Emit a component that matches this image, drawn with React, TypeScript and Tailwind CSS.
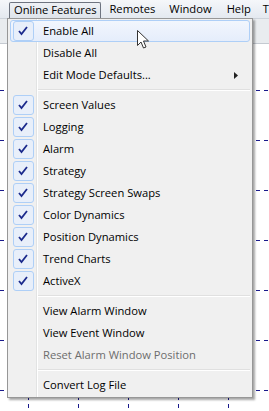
import React from "react";

type Item =
  | { kind: "item"; label: string; checked?: boolean; hot?: boolean; disabled?: boolean; sub?: boolean }
  | { kind: "sep" };

const items: Item[] = [
  { kind: "item", label: "Enable All", checked: true, hot: true },
  { kind: "item", label: "Disable All" },
  { kind: "item", label: "Edit Mode Defaults...", sub: true },
  { kind: "sep" },
  { kind: "item", label: "Screen Values", checked: true },
  { kind: "item", label: "Logging", checked: true },
  { kind: "item", label: "Alarm", checked: true },
  { kind: "item", label: "Strategy", checked: true },
  { kind: "item", label: "Strategy Screen Swaps", checked: true },
  { kind: "item", label: "Color Dynamics", checked: true },
  { kind: "item", label: "Position Dynamics", checked: true },
  { kind: "item", label: "Trend Charts", checked: true },
  { kind: "item", label: "ActiveX", checked: true },
  { kind: "sep" },
  { kind: "item", label: "View Alarm Window" },
  { kind: "item", label: "View Event Window" },
  { kind: "item", label: "Reset Alarm Window Position", disabled: true },
  { kind: "sep" },
  { kind: "item", label: "Convert Log File" },
];

const Check = () => (
  <svg width="10" height="10" viewBox="0 0 10 10">
    <path d="M1 5 L3.5 8 L9 1" fill="none" stroke="#1b2a8c" strokeWidth="1.8" />
  </svg>
);

const Cursor = () => (
  <svg width="13" height="20" viewBox="0 0 13 20" className="absolute left-[137px] top-[30px]">
    <path d="M0.5 0.5 L0.5 15.5 L4 12 L6.5 18 L9 17 L6.5 11 L11.5 11 Z" fill="#fff" stroke="#333" strokeWidth="1" />
  </svg>
);

const Grid = () => {
  const hs = [40, 90, 140, 190, 240, 290, 340, 390];
  const vs = [28, 78, 128, 178, 228];
  return (
    <svg width="269" height="411" className="absolute left-0 top-0">
      {hs.map((y) => (
        <line key={y} x1="0" y1={y + 0.5} x2="269" y2={y + 0.5} stroke="#1a1a8c" strokeDasharray="4 4" />
      ))}
      {vs.map((x) => (
        <line key={x} x1={x + 0.5} y1="44" x2={x + 0.5} y2="411" stroke="#1a1a8c" strokeDasharray="4 4" />
      ))}
    </svg>
  );
};

export default function App() {
  return (
    <div
      className="relative w-[269px] h-[411px] overflow-hidden bg-white text-[11.2px] text-black"
      style={{ fontFamily: '"Open Sans", "Noto Sans", sans-serif' }}
    >
      <Grid />
      {/* toolbar strip */}
      <div className="absolute left-0 top-[19px] w-[269px] h-[25px] bg-[#e9ecef] border-b border-[#c5cad1]" />

      {/* menu bar */}
      <div className="absolute left-0 top-0 w-[269px] h-[19px] flex items-center whitespace-nowrap bg-gradient-to-b from-[#f5f7fa] to-[#e4e9f0] border-b border-[#cdd3db]">
        <div className="ml-[9px] w-[93px] h-[17px] mt-[2px] flex items-center justify-center rounded-t-[2px] border border-b-0 border-[#6e7480] bg-gradient-to-b from-[#eef1f5] to-[#dde3ea]">
          Online Features
        </div>
        <div className="ml-[8px]">Remotes</div>
        <div className="ml-[14px]">Window</div>
        <div className="ml-[15px]">Help</div>
        <div className="ml-[12px]">T</div>
      </div>

      {/* dropdown */}
      <div className="absolute left-[7px] top-[18px] w-[246px] bg-[#f0f0f0] border border-[#979797] shadow-[2px_2px_2px_rgba(0,0,0,0.35)] py-[1px] whitespace-nowrap">
        <div className="absolute left-[28px] top-0 bottom-0 w-[1px] bg-[#e2e3e3]" />
        <div className="absolute left-[29px] top-0 bottom-0 w-[1px] bg-white" />
        {items.map((it, i) =>
          it.kind === "sep" ? (
            <div key={i} className="relative h-[8px] flex items-center pl-[30px] pr-[2px]">
              <div className="w-full">
                <div className="h-[1px] bg-[#e0e0e0]" />
                <div className="h-[1px] bg-white" />
              </div>
            </div>
          ) : (
            <div
              key={i}
              className={`relative mx-[2px] h-[22px] flex items-center rounded-[3px] border ${
                it.hot
                  ? "border-[#aecff7] bg-gradient-to-b from-[#f2f6fd] to-[#e5edfb]"
                  : "border-transparent"
              }`}
            >
              <div className="w-[24px] shrink-0 flex items-center justify-center">
                {it.checked && (
                  <div className="w-[21px] h-[20px] rounded-[3px] border border-[#aecff7] bg-[#e8effa] flex items-center justify-center">
                    <Check />
                  </div>
                )}
              </div>
              <span className={`ml-[8px] leading-none ${it.disabled ? "text-[#6d6d6d]" : ""}`}>{it.label}</span>
              {it.sub && (
                <svg width="4" height="7" viewBox="0 0 4 7" className="absolute right-[11px] top-[7px]">
                  <path d="M0 0 L4 3.5 L0 7 Z" fill="#222" />
                </svg>
              )}
            </div>
          )
        )}
      </div>
      <Cursor />
    </div>
  );
}
